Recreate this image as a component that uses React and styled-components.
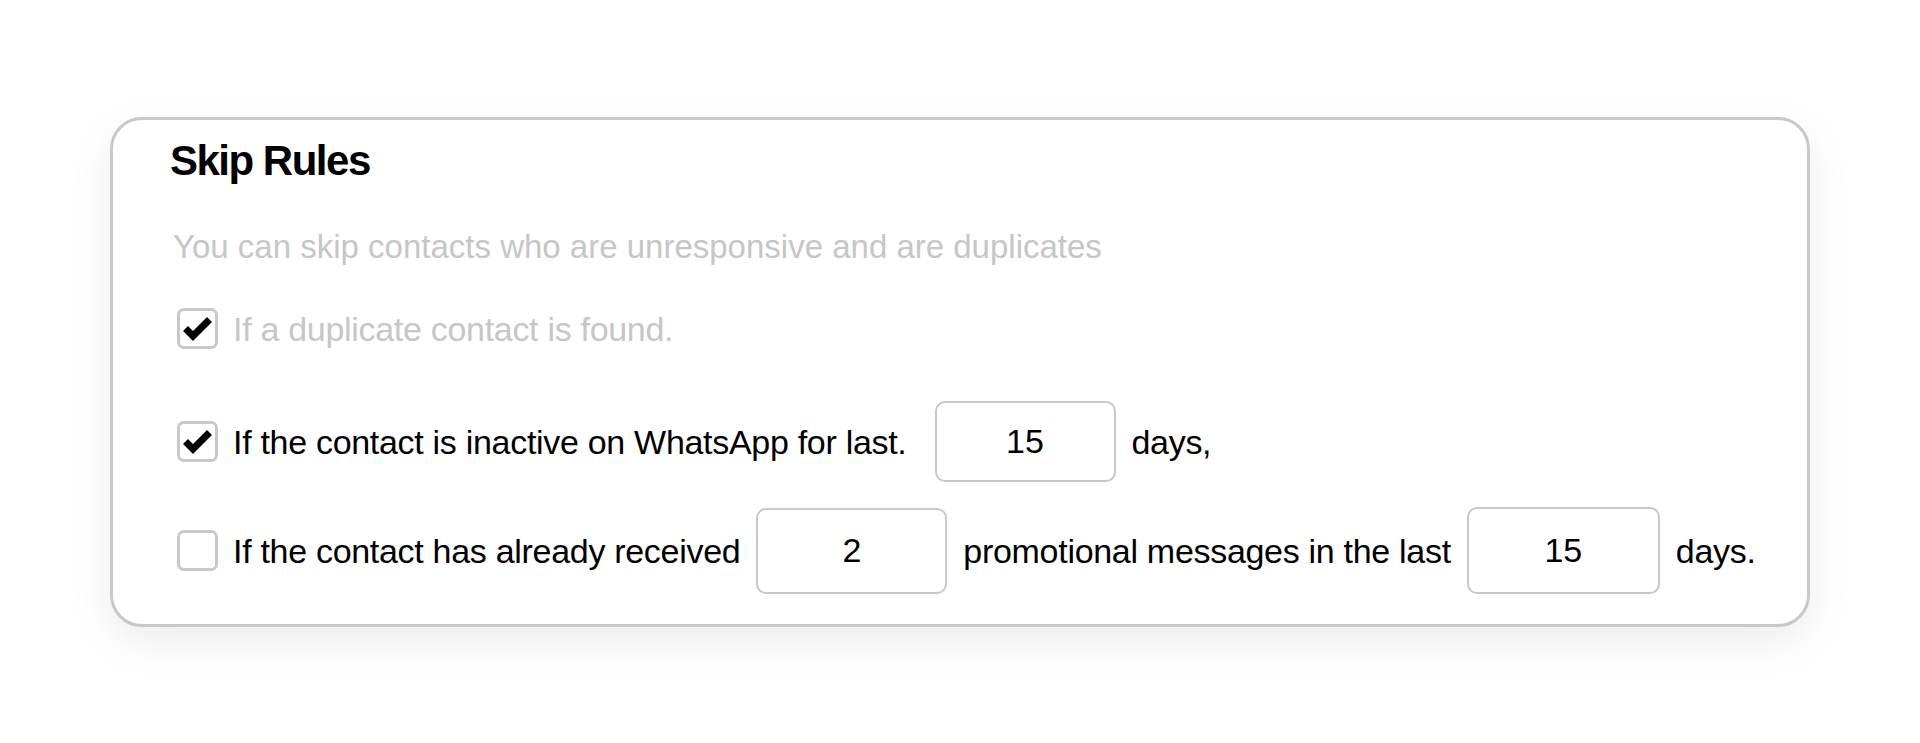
import React from "react"
import styled, { createGlobalStyle } from "styled-components"

const GlobalStyle = createGlobalStyle`
  html, body {
    margin: 0;
    padding: 0;
    background: #fff;
  }
  body {
    font-family: "Liberation Sans", Arial, Helvetica, sans-serif;
    color: #000;
  }
  * {
    box-sizing: border-box;
  }
`

const Page = styled.div`
  padding: 117px 0 0 110px;
  min-height: 743px;
`

const Card = styled.section`
  width: 1700px;
  border: 3px solid #c8c8c8;
  border-radius: 32px;
  background: #fff;
  box-shadow: 0 14px 44px rgba(0, 0, 0, 0.08);
  padding: 20px 40px 30px 57px;
  display: flex;
  flex-direction: column;
`

const Title = styled.h2`
  margin: 0;
  font-size: 42px;
  line-height: 42px;
  font-weight: 700;
  letter-spacing: -1.5px;
`

const Subtitle = styled.p`
  margin: 48px 0 0 3px;
  font-size: 33px;
  line-height: 33px;
  color: #c6c6c6;
  letter-spacing: 0;
`

const Row = styled.div`
  display: flex;
  align-items: center;
  gap: 16px;
  padding-left: 7px;
  margin-top: ${(p) => p.$top}px;
  height: ${(p) => p.$height}px;
`

const Box = styled.span`
  flex: none;
  width: 41px;
  height: 41px;
  border: 3px solid #c8c8c8;
  border-radius: 7px;
  display: flex;
  align-items: center;
  justify-content: center;
  margin-right: -1px;
  svg {
    width: 31px;
    height: 26px;
  }
`

const Text = styled.span`
  font-size: 34px;
  line-height: 34px;
  letter-spacing: -0.3px;
  white-space: nowrap;
  color: ${(p) => (p.$muted ? "#c6c6c6" : "#000")};
`

const NumberInput = styled.input`
  flex: none;
  width: ${(p) => p.$w}px;
  height: ${(p) => p.$h}px;
  margin-left: ${(p) => p.$left || 0}px;
  border: 2.5px solid #c8c8c8;
  border-radius: 10px;
  background: #fff;
  font-family: inherit;
  font-size: 34px;
  color: #000;
  text-align: center;
  padding: 0;
  outline: none;
`

const Tick = () => (
  <svg viewBox="0 0 31 26">
    <polyline
      points="3.5,12.5 11,20 27.5,3.5"
      fill="none"
      stroke="#000"
      strokeWidth="7"
      strokeLinejoin="miter"
    />
  </svg>
)

const Check = ({ checked }) => <Box>{checked && <Tick />}</Box>

const App = () => {
  return (
    <Page>
      <GlobalStyle />
      <Card>
        <Title>Skip Rules</Title>
        <Subtitle>You can skip contacts who are unresponsive and are duplicates</Subtitle>

        <Row $top={45} $height={41}>
          <Check checked />
          <Text $muted>If a duplicate contact is found.</Text>
        </Row>

        <Row $top={52} $height={81}>
          <Check checked />
          <Text>If the contact is inactive on WhatsApp for last.</Text>
          <NumberInput $w={181} $h={81} $left={12} defaultValue="15" />
          <Text>days,</Text>
        </Row>

        <Row $top={25} $height={87}>
          <Check />
          <Text>If the contact has already received</Text>
          <NumberInput $w={191} $h={86} defaultValue="2" />
          <Text>promotional messages in the last</Text>
          <NumberInput $w={193} $h={87} defaultValue="15" />
          <Text>days.</Text>
        </Row>
      </Card>
    </Page>
  )
}

export default App
